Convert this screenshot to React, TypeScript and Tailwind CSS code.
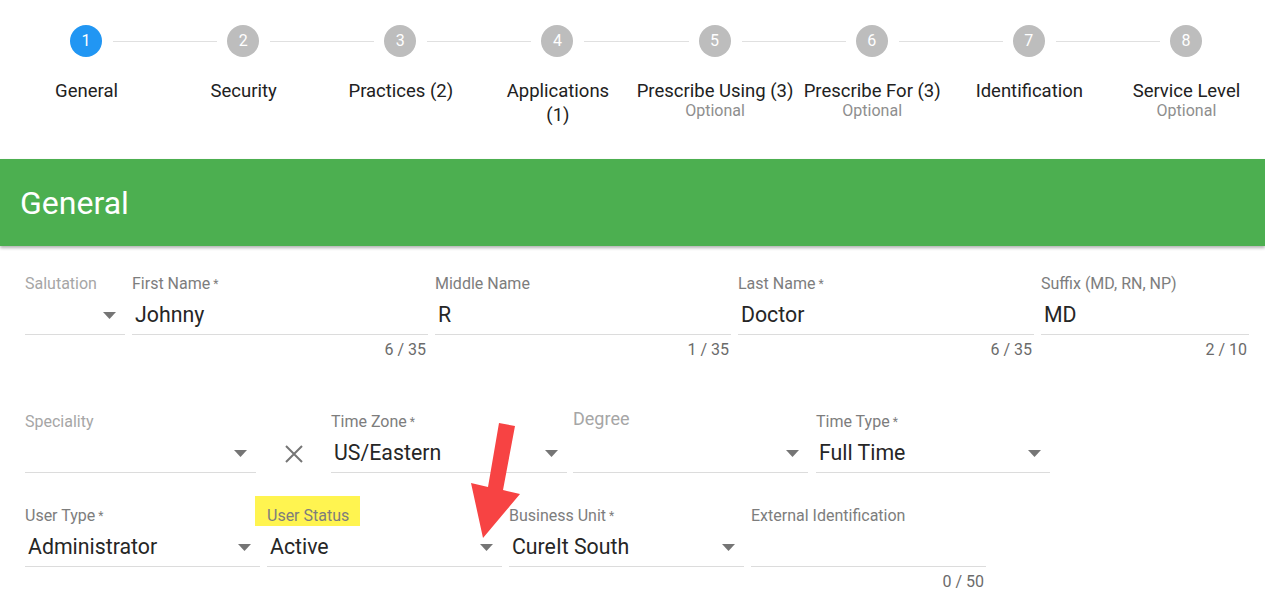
import React from 'react';

type Step = { n: number; label: React.ReactNode; optional?: boolean };

const steps: Step[] = [
  { n: 1, label: 'General' },
  { n: 2, label: 'Security' },
  { n: 3, label: 'Practices (2)' },
  { n: 4, label: <>Applications<br />(1)</> },
  { n: 5, label: 'Prescribe Using (3)', optional: true },
  { n: 6, label: 'Prescribe For (3)', optional: true },
  { n: 7, label: 'Identification' },
  { n: 8, label: 'Service Level', optional: true },
];

const DropArrow = () => (
  <svg width="13" height="7" viewBox="0 0 13 7" className="shrink-0">
    <path d="M0 0 L13 0 L6.5 7 Z" fill="#757575" />
  </svg>
);

interface FieldProps {
  label: string;
  required?: boolean;
  value?: string;
  width: string;
  select?: boolean;
  counter?: string;
  empty?: boolean;
  highlight?: boolean;
  labelClass?: string;
}

const Field: React.FC<FieldProps> = ({ label, required, value, width, select, counter, empty, highlight, labelClass }) => (
  <div className={`flex flex-col shrink-0 ${width}`}>
    <div className={`h-5 leading-5 text-[16px] whitespace-nowrap ${empty ? 'text-[#a6a6a6]' : 'text-[#7d7d7d]'} ${labelClass ?? ''}`}>
      <span className="relative">
        {highlight && <span className="absolute -left-[12px] -right-[11px] -top-[10px] -bottom-[1px] bg-[#fff450]" />}
        <span className="relative">
          {label}
          {required && <span className="text-[12px] align-top ml-[3px]">*</span>}
        </span>
      </span>
    </div>
    <div className="mt-[7px] h-[28px] flex items-center pl-[3px] pr-[9px]">
      <span className="flex-1 text-[21.3px] leading-[28px] text-[#262626] whitespace-nowrap">{value}</span>
      {select && <DropArrow />}
    </div>
    <div className="mt-[5px] h-px bg-[#dcdcdc]" />
    {counter && <div className="mt-[7px] leading-4 text-[16px] text-right pr-[2px] text-[#6b6b6b]">{counter}</div>}
  </div>
);

export default function App() {
  return (
    <div className="relative w-[1265px] h-[599px] overflow-hidden bg-white" style={{ fontFamily: 'Roboto, "Liberation Sans", sans-serif' }}>
      {/* Stepper */}
      <div className="grid grid-cols-8 pl-2 pt-[25px] h-[159px]">
        {steps.map((s, i) => (
          <div key={s.n} className="flex flex-col items-center">
            <div className="flex items-center w-full">
              <div className={`flex-1 h-px mr-[10px] ${i === 0 ? '' : 'bg-[#e0e0e0]'}`} />
              <div className={`w-8 h-8 rounded-full flex items-center justify-center text-white text-[16px] ${i === 0 ? 'bg-[#2196f3]' : 'bg-[#bdbdbd]'}`}>
                {s.n}
              </div>
              <div className={`flex-1 h-px ml-[11px] ${i === steps.length - 1 ? '' : 'bg-[#e0e0e0]'}`} />
            </div>
            <div className="mt-[22px] text-[18.5px] leading-6 text-[#212121] text-center whitespace-nowrap">{s.label}</div>
            {s.optional && <div className="text-[16px] leading-4 text-[#8e8e8e]">Optional</div>}
          </div>
        ))}
      </div>

      {/* Section header */}
      <div className="h-[87px] bg-[#4caf50] flex items-center px-5 shadow-[0_2px_3px_rgba(0,0,0,0.3)]">
        <span className="text-white text-[32px] leading-none">General</span>
      </div>

      {/* Form */}
      <div className="pl-[25px] pt-[28px]">
        <div className="flex gap-[7px]">
          <Field label="Salutation" width="w-[100px]" select empty />
          <Field label="First Name" required value="Johnny" width="w-[296px]" counter="6 / 35" />
          <Field label="Middle Name" value="R" width="w-[296px]" counter="1 / 35" />
          <Field label="Last Name" required value="Doctor" width="w-[296px]" counter="6 / 35" />
          <Field label="Suffix (MD, RN, NP)" value="MD" width="w-[208px]" counter="2 / 10" />
        </div>

        <div className="flex mt-[54px]">
          <Field label="Speciality" width="w-[231px]" select empty />
          <div className="w-[75px] flex justify-center pt-[33px]">
            <svg width="18" height="18" viewBox="0 0 18 18">
              <path d="M1 1 L17 17 M17 1 L1 17" stroke="#757575" strokeWidth="2" />
            </svg>
          </div>
          <Field label="Time Zone" required value="US/Eastern" width="w-[236px]" select />
          <div className="w-[6px]" />
          <Field label="Degree" width="w-[235px]" select empty labelClass="text-[18px] -translate-y-[3px]" />
          <div className="w-[8px]" />
          <Field label="Time Type" required value="Full Time" width="w-[234px]" select />
        </div>

        <div className="flex mt-[33px] gap-[7px]">
          <Field label="User Type" required value="Administrator" width="w-[235px]" select />
          <Field label="User Status" value="Active" width="w-[235px]" select highlight />
          <Field label="Business Unit" required value="CureIt South" width="w-[235px]" select />
          <Field label="External Identification" width="w-[235px]" counter="0 / 50" />
        </div>
      </div>

      {/* Annotation arrow */}
      <svg className="absolute left-0 top-0 pointer-events-none" width="1265" height="599">
        <polygon points="499,423 515,426 503,490 520,494 483,538 471,483 488,487" fill="#f74343" />
      </svg>
    </div>
  );
}
